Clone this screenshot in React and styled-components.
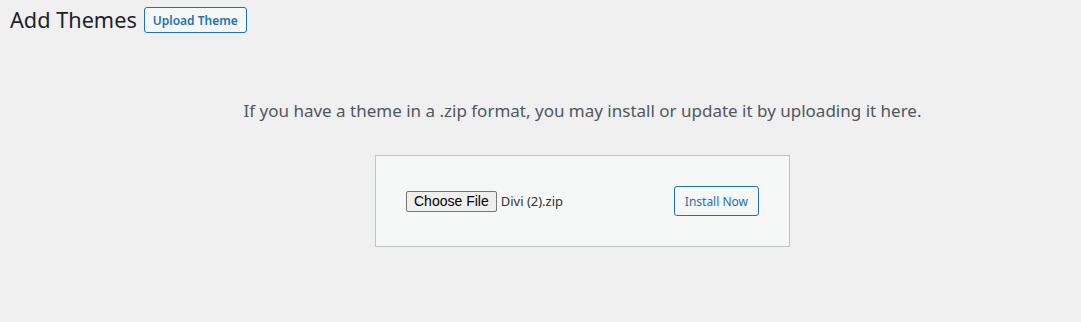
import React from 'react';
import styled, { createGlobalStyle } from 'styled-components';

const GlobalStyle = createGlobalStyle`
	body {
		margin: 0;
		background: #f0f0f1;
		font-family: 'Noto Sans', 'Open Sans', sans-serif;
		color: #1d2327;
	}
`;

function App() {
	return (
		<Page>
			<GlobalStyle />
			<Header>
				<Title>Add Themes</Title>
				<OutlineButton bold>Upload Theme</OutlineButton>
			</Header>
			<UploadArea>
				<Help>If you have a theme in a .zip format, you may install or update it by uploading it here.</Help>
				<UploadForm>
					<FileField>
						<ChooseButton>Choose File</ChooseButton>
						<FileName>Divi (2).zip</FileName>
					</FileField>
					<OutlineButton tall>Install Now</OutlineButton>
				</UploadForm>
			</UploadArea>
		</Page>
	);
}

export default App;

const Page = styled.div`
	width: 1081px;
	height: 322px;
	overflow: hidden;
`;

const Header = styled.div`
	display: flex;
	align-items: center;
	gap: 7px;
	padding: 7px 0 0 10px;
`;

const Title = styled.h1`
	margin: 0;
	font-size: 21.7px;
	font-weight: 400;
	line-height: 26px;
	color: #1d2327;
`;

const OutlineButton = styled.button`
	display: inline-flex;
	align-items: center;
	justify-content: center;
	box-sizing: border-box;
	height: ${(p) => (p.tall ? '30px' : '26px')};
	padding: 0 ${(p) => (p.tall ? '10px' : '8px')};
	border: 1px solid #2271b1;
	border-radius: 3px;
	background: #f6f7f7;
	color: #2271b1;
	font-family: inherit;
	font-size: ${(p) => (p.tall ? '12px' : '12px')};
	font-weight: ${(p) => (p.bold ? 600 : 400)};
	cursor: pointer;
`;

const UploadArea = styled.div`
	display: flex;
	flex-direction: column;
	align-items: center;
	padding-left: 84px;
	padding-top: 66px;
`;

const Help = styled.p`
	margin: 0;
	font-size: 17px;
	line-height: 24px;
	color: #50575e;
	text-align: center;
`;

const UploadForm = styled.form`
	display: flex;
	justify-content: space-between;
	align-items: center;
	box-sizing: border-box;
	width: 415px;
	height: 92px;
	margin-top: 32px;
	padding: 0 30px;
	background: #f6f7f7;
	border: 1px solid #c3c4c7;
`;

const FileField = styled.div`
	display: flex;
	align-items: center;
	gap: 4px;
`;

const ChooseButton = styled.button`
	box-sizing: border-box;
	height: 21px;
	padding: 0 7px;
	border: 1px solid #767676;
	border-radius: 2px;
	background: #efefef;
	color: #000;
	font-family: 'Liberation Sans', Arial, sans-serif;
	font-size: 14px;
`;

const FileName = styled.span`
	font-size: 13px;
	color: #2c3338;
`;
